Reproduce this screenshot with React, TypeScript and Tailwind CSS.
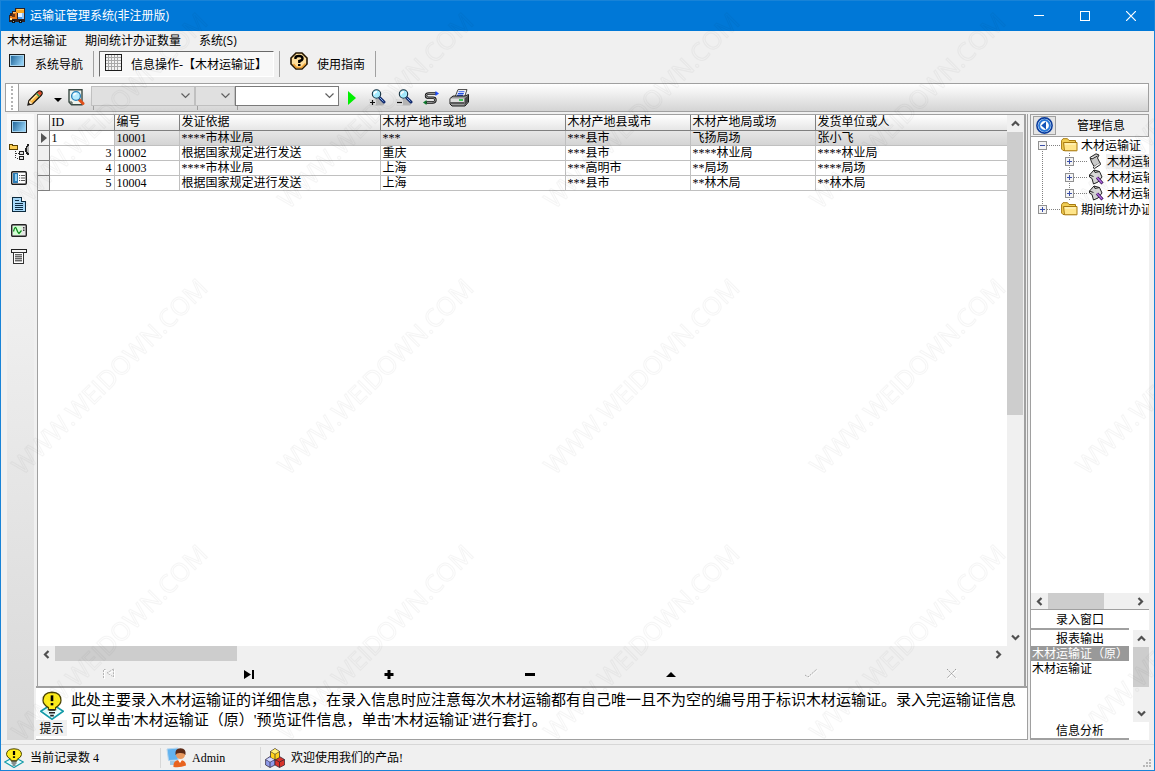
import type { ReactNode } from 'react';

const columns = [
    { title: 'ID', width: 'w-[65px]' },
    { title: '编号', width: 'w-[65px]' },
    { title: '发证依据', width: 'w-[201px]' },
    { title: '木材产地市或地', width: 'w-[185px]' },
    { title: '木材产地县或市', width: 'w-[125px]' },
    { title: '木材产地局或场', width: 'w-[125px]' },
    { title: '发货单位或人', width: '' },
];

const rows = [
    ['1', '10001', '****市林业局', '***', '***县市', '飞扬局场', '张小飞'],
    ['3', '10002', '根据国家规定进行发送', '重庆', '***县市', '****林业局', '****林业局'],
    ['4', '10003', '****市林业局', '上海', '***高明市', '**局场', '****局场'],
    ['5', '10004', '根据国家规定进行发送', '上海', '***县市', '**林木局', '**林木局'],
];

type ArrowProps = { dir: 'up' | 'down' | 'left' | 'right' };

const arrowPaths = {
    up: 'M4 9.5L7.5 6L11 9.5',
    down: 'M4 5.5L7.5 9L11 5.5',
    left: 'M9.5 4L6 7.5L9.5 11',
    right: 'M5.5 4L9 7.5L5.5 11',
};

const arrowSizes = {
    up: 'h-[17px] w-4',
    down: 'h-[17px] w-4',
    left: 'h-4 w-[17px]',
    right: 'h-4 w-[17px]',
};

const ScrollArrow = ({ dir }: ArrowProps) => (
    <button type="button" aria-label={dir} className={`flex shrink-0 items-center justify-center ${arrowSizes[dir]}`}>
        <svg width="15" height="15" viewBox="0 0 15 15" fill="none" stroke="#505050" strokeWidth="2.2">
            <path d={arrowPaths[dir]} />
        </svg>
    </button>
);

/* ---- icons ---- */

const TruckIcon = () => (
    <svg width="16" height="16" viewBox="0 0 16 16" shapeRendering="crispEdges">
        <path d="M6 0h10v14H0V7h1V5h2V3h3z" fill="#2e2224" />
        <path d="M7 1h8v4H7z" fill="#f7a520" />
        <path d="M8 1h7v1H8z" fill="#ffc860" />
        <path d="M9 5h6v4H9z" fill="#e8f2ff" />
        <path d="M9 9h6v2H9z" fill="#4a9df0" />
        <path d="M13 5h2v6h-2z" fill="#8cc4fa" />
        <path d="M4 4h4v7H1V8h2V6h1z" fill="#e87b1c" />
        <path d="M3 6h3v3H3z" fill="#6d3a18" />
        <path d="M4 4h3v1H4z" fill="#ffc56b" />
        <path d="M1 10h2v2H1z" fill="#ffe08a" />
        <path d="M3 12h3v3H3zM10 12h3v3h-3z" fill="#101010" />
        <path d="M4 13h1v1H4zM11 13h1v1h-1z" fill="#9aa" />
    </svg>
);

const ScreenIcon = () => (
    <svg width="16" height="13" viewBox="0 0 16 13" shapeRendering="crispEdges">
        <defs>
            <linearGradient id="screen" x1="0" x2="1" y1="0.2" y2="0.6">
                <stop offset="0" stopColor="#2a6ea0" />
                <stop offset="1" stopColor="#8fcdf2" />
            </linearGradient>
        </defs>
        <path d="M0 0h16v13H0z" fill="#1c1c1c" />
        <path d="M1 1h14v11H1z" fill="#a8d4ee" />
        <path d="M2 2h12v9H2z" fill="url(#screen)" />
    </svg>
);

const GridIcon = () => (
    <svg width="17" height="17" viewBox="0 0 17 17" shapeRendering="crispEdges">
        <path d="M0.5 0.5h16v16h-16z" fill="#f2f2f2" stroke="#1c1c1c" />
        <path d="M3.500 1v15M6.500 1v15M9.500 1v15M12.500 1v15M1 3.500h15M1 6.500h15M1 9.500h15M1 12.500h15" stroke="#a8a8a8" fill="none" />
    </svg>
);

const HelpIcon = () => (
    <svg width="18" height="18" viewBox="0 0 18 18">
        <path d="M6 1h6l5 5v6l-5 5H6l-5-5V6z" fill="#ffdf9c" stroke="#241600" strokeWidth="1.6" />
        <path d="M3.500 12l3 3.500h5l4-4" fill="none" stroke="#f0a030" strokeWidth="1.500" />
        <path d="M5.500 7V5.500Q6 4 9 4Q12.500 4 12.500 6.500Q12.500 8.500 9.300 9v2" fill="none" stroke="#000" strokeWidth="2.400" />
        <path d="M8 12h2.500v2H8z" fill="#000" />
    </svg>
);

const PencilIcon = () => (
    <svg width="16" height="16" viewBox="0 0 16 16">
        <path d="M1 15L2 10.500L10.500 2Q12.500 0 14.500 1.500Q16 3.500 14 5.500L5.500 14z" fill="#f6b341" stroke="#17100a" strokeWidth="1.300" />
        <path d="M2.500 10.500l3 3L1.500 14.500z" fill="#f7dfb8" />
        <path d="M4 10.500L10.500 4" stroke="#ffe59a" strokeWidth="1.500" />
        <path d="M9.500 3.500l3 3" stroke="#2f8f55" strokeWidth="1.500" />
        <path d="M10.500 3Q12.500 .8 14.200 2Q15.300 3.500 13.200 5.500z" fill="#e0452b" />
        <path d="M1 15l.6-2.500 2 2z" fill="#111" />
    </svg>
);

const PreviewIcon = () => (
    <svg width="17" height="17" viewBox="0 0 17 17">
        <path d="M1 .7h13v15H3.500L1 13z" fill="#eef4ee" stroke="#3a4a44" strokeWidth="1.400" />
        <path d="M1 13h3v3" fill="none" stroke="#3a4a44" />
        <path d="M11 10.500l4 4" stroke="#e0501a" strokeWidth="3" strokeLinecap="round" />
        <circle cx="8" cy="7" r="4.400" fill="#b6ecff" stroke="#287fb8" strokeWidth="1.300" />
        <path d="M5.500 6.500Q6 4.500 8.500 4.500" stroke="#fff" strokeWidth="1.300" fill="none" />
    </svg>
);

const ZoomIcon = ({ plus = false }) => (
    <svg width="17" height="17" viewBox="0 0 17 17">
        <rect x="0" y="10" width="15" height="6.500" rx="1.500" fill="#b4b4b4" />
        <rect x="0" y="10" width="7" height="6.500" rx="1.500" fill="#dcdcdc" />
        <path d={plus ? 'M1 13.500h5M3.500 11v5' : 'M1 13.500h5'} stroke="#111" strokeWidth="1.200" />
        <path d="M10.500 8.500l4.500 4.500" stroke="#10286b" strokeWidth="3" strokeLinecap="round" />
        <path d="M10.500 8.500l4 4" stroke="#7fb0f0" strokeWidth="1" />
        <circle cx="7.500" cy="5" r="4.200" fill="#a5ecff" stroke="#14303f" strokeWidth="1.100" />
        <path d="M5.200 5.500Q5.200 2.800 8 2.800" stroke="#fff" strokeWidth="1.600" fill="none" />
    </svg>
);

const FlowIcon = () => (
    <svg width="16" height="14" viewBox="0 0 16 14" fill="none">
        <path d="M13 2.500H6Q3 2.500 3 4.700Q3 6.800 5.500 6.800H10Q12.500 6.800 12.500 9Q12.500 11.500 9.500 11.500H3" stroke="#111" strokeWidth="2.400" />
        <path d="M12.500 2.500H6Q3 2.500 3 4.700Q3 6.800 5.500 6.800H10Q12.500 6.800 12.500 9Q12.500 11.500 9.500 11.500H4" stroke="#c4c4c4" strokeWidth=".7" />
        <path d="M12.500 0l3.500 2.500-3.500 2.500z" fill="#1c4cff" />
        <path d="M3.500 9L0 11.500 3.500 14z" fill="#0c7a2c" />
    </svg>
);

const PrinterIcon = () => (
    <svg width="20" height="18" viewBox="0 0 20 18">
        <path d="M6 8L9 .6h9L15.500 8z" fill="#fff" stroke="#444" />
        <path d="M9.500 2.800h6M8.800 4.600h6M8 6.400h6" stroke="#2450e0" strokeWidth="1.100" />
        <path d="M1 9.500L4 7h12l3.500-1.500V13L16 17H3l-2-2z" fill="#9a9a9a" stroke="#1a1a1a" />
        <path d="M1.500 9.500h14V13h-14z" fill="#dedede" />
        <path d="M15.500 9.500L19 6.500V13l-3.500 3.500z" fill="#4a4a4a" />
        <path d="M10 11h4" stroke="#0cc02c" strokeWidth="1.500" />
        <path d="M2 14h13" stroke="#1a1a1a" />
    </svg>
);

const FolderTreeIcon = () => (
    <svg width="20" height="16" viewBox="0 0 20 16" shapeRendering="crispEdges">
        <path d="M0.500 0.500h3v1h5v4h-8z" fill="#fccf55" stroke="#5a4100" />
        <path d="M6.500 7v7h3M6.500 9.500h3" stroke="#333" fill="none" strokeDasharray="1 1" />
        <path d="M10.500 7.500h4v3h-4zM10.500 12.500h4v3h-4z" fill="#e2e2e2" stroke="#222" />
        <path d="M20 0v11h-2v-1h-1V8h-1V4h1V2h1V0z" fill="#222" />
        <path d="M20 2v7h-1V8h-1V3h1V2z" fill="#b4b4b4" />
    </svg>
);

const FormIcon = () => (
    <svg width="16" height="14" viewBox="0 0 16 14">
        <rect x=".7" y=".7" width="14.600" height="12.600" rx="1.200" fill="#fff" stroke="#1c1c1c" strokeWidth="1.400" />
        <path d="M2 2h5v10H2z" fill="#2d7cb5" />
        <path d="M4 3h2v7H4z" fill="#8fd0f4" />
        <path d="M8 4.500h1.200M10 4.500h4M8 7h1.200M10 7h4M8 9.500h1.200M10 9.500h4" stroke="#555" />
    </svg>
);

const DocIcon = () => (
    <svg width="14" height="15" viewBox="0 0 14 15" shapeRendering="crispEdges">
        <path d="M0.500 0.500h9l4 4v10h-13z" fill="#a9dafa" stroke="#0c2a3d" />
        <path d="M9.500 0.500v4h4" fill="#fff" stroke="#0c2a3d" />
        <path d="M3 3.500h4M3 6.500h8M3 8.500h8M3 10.500h8M3 12.500h8" stroke="#0f2c44" />
    </svg>
);

const ScopeIcon = () => (
    <svg width="16" height="13" viewBox="0 0 16 13">
        <rect x=".7" y=".7" width="14.600" height="11.600" rx="1" fill="#e6e6e6" stroke="#222" strokeWidth="1.400" />
        <path d="M2 2h8.500v9H2z" fill="#d3ffd3" />
        <path d="M2.500 7.500Q4 1 5.500 5T8 9.500L10.500 6.500" fill="none" stroke="#0c8a1c" strokeWidth="1.200" />
        <path d="M12.800 3v1.500M12.800 5.500V7" stroke="#222" strokeWidth="1.300" />
    </svg>
);

const ScrollIcon = () => (
    <svg width="16" height="15" viewBox="0 0 16 15" shapeRendering="crispEdges">
        <path d="M0.500 0.500h15v3h-15z" fill="#f6f6f6" stroke="#222" />
        <path d="M2.500 3.500h10v11h-10z" fill="#fff" stroke="#333" />
        <path d="M4 5h7v8H4z" fill="#bbb" />
        <path d="M4 5.500h7M4 7.500h7M4 9.500h7M4 11.500h7" stroke="#666" />
    </svg>
);

const BulbIcon = ({ width = 20, height = 20 }) => (
    <svg width={width} height={height} viewBox="0 0 20 20" preserveAspectRatio="none" className="shrink-0">
        <path d="M10 9L19.300 14L10 19.500L.7 14z" fill="#e8ffff" stroke="#149aa8" strokeWidth="1.200" />
        <path d="M10 .8Q17.500 1 17.500 6.500Q17.500 9 13 11.500V13H7V11.500Q2.500 9 2.500 6.500Q2.500 1 10 .8z" fill="#ffee1c" stroke="#4a4200" />
        <path d="M7.500 13h5M7.500 15h5M8.500 17h3" stroke="#222" strokeWidth="1.200" />
        <path d="M10 3v4" stroke="#000" strokeWidth="2.200" />
        <path d="M8.900 8.300h2.200v1.600H8.900z" fill="#000" />
    </svg>
);

const UserIcon = () => (
    <svg width="21" height="21" viewBox="0 0 21 21" className="shrink-0">
        <path d="M1 2l11-1v12L2.500 13.500z" fill="#63b3ef" stroke="#b7d6ee" />
        <path d="M4 14l5 0 2 4H4z" fill="#9fc8e4" />
        <path d="M7.500 20Q7 13 13.500 13Q20 13 20 18.500Q14 21 7.500 20z" fill="#e8631f" />
        <path d="M12 13l2 3 2-3z" fill="#fff" />
        <circle cx="14.500" cy="7.500" r="4.600" fill="#e99a60" />
        <path d="M9.500 8Q8.500 1.500 14.500 1.200Q20.500 1.500 19.500 8Q18 5.500 13.500 6Q10.500 6 9.500 8z" fill="#5b2a16" />
    </svg>
);

const BlocksIcon = () => (
    <svg width="20" height="20" viewBox="0 0 20 20" className="shrink-0" stroke="#2a2030" strokeWidth=".7">
        <path d="M.6 11.500L5 8.500l5 3V17l-5 2.500L.6 17z" fill="#8f9bea" />
        <path d="M10 11.500l4.500-3 5 3V17l-5 2.500-4.500-2.500z" fill="#d8342c" />
        <path d="M5.500 3.500L10 .5l4.500 3v6L10 12 5.500 9.500z" fill="#ffd21a" />
        <path d="M5.500 3.500L10 6l4.500-2.500M10 6v5M.6 11.500L5 14l5-2.500M5 14v5.500M10 11.500l4.500 2.500 5-2.500M14.500 14v5.500" fill="none" />
        <path d="M6 3.500L10 1l4 2.500L10 5.700z" fill="#fff07a" stroke="none" />
        <path d="M1.200 11.500L5 9.500l4.200 2L5 13.700z" fill="#d3d9ff" stroke="none" />
    </svg>
);

const FolderIcon = () => (
    <svg width="17" height="14" viewBox="0 0 17 14" className="shrink-0">
        <path d="M.6 2.500L2 .7h4.500L8 2.500h6.500v10H2L.6 11z" fill="#f2cf55" stroke="#a87a10" />
        <path d="M2.500 4.500H16v8.300H3.500z" fill="#ffe58a" stroke="#a87a10" />
        <path d="M4 6h10.500" stroke="#fff8d0" />
    </svg>
);

const PaperIcon = () => (
    <svg width="16" height="16" viewBox="0 0 16 16" className="shrink-0">
        <path d="M2 4.500L8 .8L11 2L9.500 5L12 10L6 13.500L3.500 9z" fill="#c9c9c9" stroke="#222" />
        <path d="M2 4.500L4 6L9.500 3M6 13.500Q4.500 15.500 6.500 15.500L12.500 11.500L12 9.500" fill="#eee" stroke="#222" />
    </svg>
);

const EditPaperIcon = () => (
    <svg width="16" height="16" viewBox="0 0 16 16" className="shrink-0">
        <path d="M1.500 6L6 1L11.500 2.500L14 8L10 13L5.500 15L4 9.500L1.500 8z" fill="#d8d8d8" stroke="#222" />
        <path d="M6 1l1 2.500 4.500-1M1.500 6l4 1.500" stroke="#222" fill="none" />
        <path d="M9 8.500l5.500 6" stroke="#3b1359" strokeWidth="3" />
        <path d="M9 8.500l5 5.500" stroke="#b06be0" strokeWidth="1.500" />
    </svg>
);

const BackIcon = () => (
    <svg width="17" height="17" viewBox="0 0 17 17">
        <circle cx="8.500" cy="8.500" r="7.600" fill="#fff" stroke="#0b3c9c" strokeWidth="1.600" />
        <circle cx="8.500" cy="8.500" r="5.400" fill="#fff" stroke="#2a78d8" strokeWidth="2" />
        <path d="M10 4.500v8L5.200 8.500z" fill="#1353b8" />
    </svg>
);

/* ---- form pieces ---- */

type ComboProps = { label: string; width: string; disabled?: boolean };

const Combo = ({ label, width, disabled }: ComboProps) => (
    <div className={`${width} shrink-0`}>
        <div className={`grid h-5 items-center border ${disabled ? 'border-[#c0c0c0] bg-[#e0e0e0]' : 'border-[#7a7a7a] bg-white'}`}>
            <select aria-label={label} disabled={disabled} className="col-start-1 row-start-1 h-full w-full appearance-none px-1 outline-none">
                <option></option>
            </select>
            <svg className="pointer-events-none col-start-1 row-start-1 mr-1 justify-self-end" width="9" height="6" viewBox="0 0 9 6" fill="none" stroke="#606060">
                <path d="M.5 .5L4.500 4.500L8.500 .5" strokeWidth="1.200" />
            </svg>
        </div>
        <div className="ml-[2px] h-1 w-px bg-[#a0a0a0]" />
    </div>
);

const Divider = () => <div className="h-[26px] w-px shrink-0 bg-[#a0a0a0]" />;

const navigatorButtons: { label: string; icon: ReactNode }[] = [
    { label: '首条', icon: <g><path d="M2.500 11V2.500h2M12.500 2L6 6l6.500 4z" stroke="#fff" fill="none" /><path d="M1.500 10V1.500h2M11.500 1L5 5l6.500 4z" stroke="#b4b4b4" fill="none" strokeDasharray="2 1" /></g> },
    { label: '末条', icon: <path d="M1 2l7 4.500L1 11zM9 2h2v9H9z" fill="#000" /> },
    { label: '添加', icon: <path d="M4.500 2h3v3h3v3h-3v3h-3V8h-3V5h3z" fill="#000" /> },
    { label: '删除', icon: <path d="M1 5h10v3H1z" fill="#000" /> },
    { label: '编辑', icon: <path d="M1 9L6 4l5 5z" fill="#000" /> },
    { label: '提交', icon: <g fill="none" strokeDasharray="2 1"><path d="M1 8l3 2 9-8" stroke="#fff" /><path d="M0 7l3 2 9-8" stroke="#a8a8a8" /></g> },
    { label: '取消', icon: <g fill="none"><path d="M2 2l9 9M11 2l-9 9" stroke="#fff" /><path d="M1 1l9 9M10 1l-9 9" stroke="#9c9c9c" strokeDasharray="2 1" /></g> },
];

const railButtons = [
    { label: '窗口', icon: <ScreenIcon /> },
    { label: '导航树', icon: <FolderTreeIcon /> },
    { label: '表单', icon: <FormIcon /> },
    { label: '文档', icon: <DocIcon /> },
    { label: '统计', icon: <ScopeIcon /> },
    { label: '报表', icon: <ScrollIcon /> },
];

const treeItems = [
    { text: '木材运输证', level: 0, open: true, icon: <FolderIcon /> },
    { text: '木材运输证', level: 1, icon: <PaperIcon />, active: true },
    { text: '木材运输证', level: 1, icon: <EditPaperIcon /> },
    { text: '木材运输证', level: 1, icon: <EditPaperIcon /> },
    { text: '期间统计办证数量', level: 0, last: true, icon: <FolderIcon /> },
];

type TreeLinesProps = { level: number; open?: boolean; last?: boolean };

const TreeLines = ({ level, open, last }: TreeLinesProps) => {
    const x = level === 0 ? 7 : 34;
    const w = level === 0 ? 30 : 57;
    return (
        <svg width={w} height="16" viewBox={`0 0 ${w} 16`} className="shrink-0" shapeRendering="crispEdges" fill="none">
            <g stroke="#808080" strokeDasharray="1 1">
                {level === 1 && <path d="M11.500 0v16M38.500 0v16" />}
                {open && <path d="M11.500 12v4" />}
                {last && <path d="M11.500 0v4" />}
                <path d={`M${x + 9} 8.500H${w}`} />
            </g>
            <path d={`M${x + 0.5} 4.500h8v8h-8z`} fill="#f4f4f4" stroke="#919191" />
            <path d={open ? `M${x + 2} 8.500h5` : `M${x + 2} 8.500h5M${x + 4.5} 6v5`} stroke="#3b4fa8" />
        </svg>
    );
};

const Watermark = () => (
    <svg className="pointer-events-none absolute inset-0 z-10 h-full w-full" aria-hidden="true">
        <defs>
            <pattern id="mark" x="-23" y="-24" width="266" height="266" patternUnits="userSpaceOnUse">
                <text
                    x="131"
                    y="142"
                    textAnchor="middle"
                    transform="rotate(-45 133 133)"
                    className="font-['Open_Sans',sans-serif] text-[25px]"
                    fill="none"
                    stroke="#000"
                    strokeOpacity="0.04"
                >
                    WWW.WEIDOWN.COM
                </text>
            </pattern>
        </defs>
        <rect width="100%" height="100%" fill="url(#mark)" />
    </svg>
);

const TitleBar = () => (
    <header className="flex h-[31px] shrink-0 items-center border-t border-[#1883d7] bg-[#0078d7] pl-2 text-white">
        <TruckIcon />
        <h1 className="ml-[5px] grow text-xs">运输证管理系统(非注册版)</h1>
        <button type="button" aria-label="最小化" className="flex h-full w-[46px] items-center justify-center">
            <svg width="10" height="10" stroke="#fff" shapeRendering="crispEdges"><path d="M0 4.500h10" /></svg>
        </button>
        <button type="button" aria-label="最大化" className="flex h-full w-[46px] items-center justify-center">
            <svg width="10" height="10" stroke="#fff" fill="none" shapeRendering="crispEdges"><path d="M.5 .5h9v9h-9z" /></svg>
        </button>
        <button type="button" aria-label="关闭" className="flex h-full w-[46px] items-center justify-center">
            <svg width="10" height="10" stroke="#fff" strokeWidth="1.200"><path d="M0 0l10 10M10 0L0 10" /></svg>
        </button>
    </header>
);

const DataGrid = () => (
    <table className="w-full table-fixed border-collapse text-left">
        <thead>
            <tr className="h-[15px] bg-linear-to-b from-white to-[#e6e6e6]">
                <th className="w-[11px] border-r border-b border-[#808080] p-0" />
                {columns.map((col) => (
                    <th key={col.title} className={`${col.width} border-r border-b border-[#808080] px-[2px] py-0 font-normal whitespace-nowrap last:border-r-0`}>
                        {col.title}
                    </th>
                ))}
            </tr>
        </thead>
        <tbody>
            {rows.map((row, i) => (
                <tr key={row[1]} className={i === 0 ? 'h-[15px] bg-linear-to-b from-[#e8e8e8] to-[#d4d4d4]' : 'h-[15px] bg-white'}>
                    <td className="border-r border-b border-[#808080] bg-[#f0f0f0] p-0">
                        {i === 0 && (
                            <svg width="10" height="10" className="block pl-[3px]" viewBox="0 0 7 10">
                                <path d="M0 0l6 5-6 5z" fill="#555" />
                            </svg>
                        )}
                    </td>
                    {row.map((cell, j) => (
                        <td
                            key={j}
                            className={`overflow-hidden border-r border-b border-[#c0c0c0] px-[2px] py-0 whitespace-nowrap last:border-r-0 ${j === 0 ? 'bg-white' : ''} ${j === 0 && i > 0 ? 'text-right' : ''}`}
                        >
                            {cell}
                        </td>
                    ))}
                </tr>
            ))}
        </tbody>
    </table>
);

const SidePanel = () => (
    <aside className="flex w-[119px] shrink-0 flex-col border-l border-[#a0a0a0] bg-white">
        <div className="flex h-[23px] shrink-0 items-center border-y border-r border-[#a0a0a0] bg-[#f0f0f0] pr-[2px] pl-[2px]">
            <button type="button" aria-label="收起" className="flex h-[19px] w-[23px] items-center justify-center border border-[#a0a0a0] bg-[#e4e4e4]">
                <BackIcon />
            </button>
            <span className="grow text-center">管理信息</span>
        </div>
        <ul className="min-h-0 grow overflow-hidden">
            {treeItems.map((item, i) => (
                <li key={i}>
                    <button type="button" className="flex h-4 items-center whitespace-nowrap">
                        <TreeLines level={item.level} open={item.open} last={item.last} />
                        {item.icon}
                        <span className={item.active ? 'ml-[2px] bg-[#f0f0f0] pt-px pl-px' : 'ml-[3px] pt-px'}>{item.text}</span>
                    </button>
                </li>
            ))}
        </ul>
        <div className="flex h-4 shrink-0 items-center bg-[#f0f0f0]">
            <ScrollArrow dir="left" />
            <div className="h-full grow">
                <div className="h-full w-2/3 bg-[#cdcdcd]" />
            </div>
            <ScrollArrow dir="right" />
        </div>
        <div className="flex h-[131px] shrink-0 border-t border-[#a0a0a0]">
            <div className="flex w-[98px] flex-col border-b-2 border-[#a0a0a0]">
                <button type="button" className="h-5 border-b-2 border-[#a0a0a0] pt-[2px]">录入窗口</button>
                <button type="button" className="h-4 pt-[2px]">报表输出</button>
                <ul className="grow">
                    <li className="h-[15px] overflow-hidden bg-[#999] whitespace-nowrap text-white">
                        <button type="button" className="block px-px pt-px">木材运输证（原）</button>
                    </li>
                    <li className="h-4">
                        <button type="button" className="block px-px pt-px">木材运输证</button>
                    </li>
                </ul>
                <button type="button" className="h-4 pt-px">信息分析</button>
            </div>
            <div className="mt-5 ml-1 flex h-[92px] w-4 flex-col bg-[#f0f0f0]">
                <ScrollArrow dir="up" />
                <div className="h-10 bg-[#cdcdcd]" />
                <div className="grow" />
                <ScrollArrow dir="down" />
            </div>
        </div>
    </aside>
);

const App = () => {
    return (
        <div className="relative flex h-screen flex-col overflow-hidden border-x border-b border-[#1883d7] bg-[#f0f0f0] font-['Liberation_Serif','Noto_Sans_CJK_SC',sans-serif] text-xs leading-[14px] text-black">
            <div className="contents font-['Open_Sans','Noto_Sans_CJK_SC',sans-serif]">
                <TitleBar />
                <nav className="flex h-5 shrink-0 items-center gap-[18px] pl-[6px]">
                    <a href="#transport">木材运输证</a>
                    <a href="#stats">期间统计办证数量</a>
                    <a href="#system">系统(S)</a>
                </nav>
            </div>

            {/* Page switcher */}
            <div className="flex h-[26px] shrink-0 pl-2">
                <button type="button" className="flex w-[84px] gap-[10px] pt-[3px]">
                    <ScreenIcon />
                    <span className="pt-1">系统导航</span>
                </button>
                <Divider />
                <button type="button" className="mx-[5px] flex h-[26px] w-[175px] gap-[9px] border border-t-[#696969] border-r-white border-b-white border-l-[#696969] bg-[#f8f8f8] pt-[2px] pl-[5px]">
                    <GridIcon />
                    <span className="pt-1 whitespace-nowrap">信息操作-【木材运输证】</span>
                </button>
                <Divider />
                <button type="button" className="flex w-[95px] gap-[9px] pt-px pl-[10px]">
                    <HelpIcon />
                    <span className="pt-[6px]">使用指南</span>
                </button>
                <Divider />
            </div>

            {/* Toolbar */}
            <div className="mt-[6px] mr-[5px] ml-1 flex h-[29px] shrink-0 items-center border border-[#a0a0a0] bg-linear-to-b from-white to-[#d4d4d4]">
                <div className="flex h-full items-center border-r border-[#a0a0a0] bg-white px-[5px]">
                    <div className="h-6 border-l-2 border-dotted border-[#b4b4b4]" />
                </div>
                <button type="button" aria-label="编辑" className="ml-2"><PencilIcon /></button>
                <button type="button" aria-label="更多" className="ml-[11px] pt-1">
                    <svg width="8" height="4"><path d="M0 0h8L4 4z" /></svg>
                </button>
                <button type="button" aria-label="预览" className="mr-[6px] ml-[6px]"><PreviewIcon /></button>
                <Combo label="字段" width="w-[104px]" disabled />
                <Combo label="条件" width="w-10" disabled />
                <Combo label="内容" width="w-[104px]" />
                <div className="ml-2 flex items-center gap-[10px]">
                    <button type="button" aria-label="执行">
                        <svg width="10" height="14"><path d="M1 0l8 7-8 7z" fill="#00f000" /></svg>
                    </button>
                    <button type="button" aria-label="放大" className="ml-[2px]"><ZoomIcon plus /></button>
                    <button type="button" aria-label="缩小"><ZoomIcon /></button>
                    <button type="button" aria-label="流程"><FlowIcon /></button>
                    <button type="button" aria-label="打印"><PrinterIcon /></button>
                </div>
            </div>

            <main className="mt-[2px] mr-[5px] mb-1 ml-[6px] flex min-h-0 grow">
                <div className="flex w-[27px] shrink-0 flex-col items-center bg-linear-to-b from-[#fafafa] to-[#d8d8d8] pr-1">
                    {railButtons.map((item) => (
                        <button key={item.label} type="button" aria-label={item.label} className="flex h-[26px] items-center pb-[2px]">
                            {item.icon}
                        </button>
                    ))}
                </div>

                <div className="ml-[2px] flex min-w-0 grow flex-col border-r border-[#a0a0a0]">
                    <div className="mx-px flex min-h-0 grow flex-col border-t border-r-2 border-l border-[#a0a0a0] bg-[#f0f0f0] pr-px">
                        <div className="flex min-h-0 grow">
                            <div className="min-w-0 grow bg-white">
                                <DataGrid />
                            </div>
                            <div className="flex w-4 flex-col">
                                <ScrollArrow dir="up" />
                                <div className="grow">
                                    <div className="h-[57%] bg-[#cdcdcd]" />
                                </div>
                                <ScrollArrow dir="down" />
                            </div>
                        </div>
                        <div className="flex h-4 shrink-0 pr-4">
                            <ScrollArrow dir="left" />
                            <div className="h-4 grow">
                                <div className="h-[15px] w-[182px] bg-[#cdcdcd]" />
                            </div>
                            <ScrollArrow dir="right" />
                        </div>
                        <div className="flex h-6 shrink-0">
                            {navigatorButtons.map((btn) => (
                                <button key={btn.label} type="button" aria-label={btn.label} className="flex flex-1 items-center justify-center">
                                    <svg width="13" height="12">{btn.icon}</svg>
                                </button>
                            ))}
                        </div>
                    </div>

                    {/* Hint */}
                    <div className="flex h-[54px] shrink-0 border-t-2 border-b border-[#a0a0a0] bg-white">
                        <div className="flex w-[35px] shrink-0 flex-col items-center pt-[3px] pr-1">
                            <BulbIcon width={24} height={29} />
                            <span className="w-full bg-[#f0f0f0] pt-[2px] text-center">提示</span>
                        </div>
                        <p className="grow pt-[2px] text-[15px] leading-5">
                            此处主要录入木材运输证的详细信息，在录入信息时应注意每次木材运输都有自己唯一且不为空的编号用于标识木材运输证。录入完运输证信息可以单击'木材运输证（原）'预览证件信息，单击'木材运输证'进行套打。
                        </p>
                    </div>
                </div>

                <div className="w-[2px] shrink-0" />
                <SidePanel />
            </main>

            <footer className="flex h-[26px] shrink-0 items-center border-t border-[#d7d7d7]">
                <div className="flex w-[160px] items-center gap-[6px] border-r border-[#d7d7d7] pl-[3px]">
                    <BulbIcon />
                    <span className="pt-px">当前记录数 4</span>
                </div>
                <div className="flex w-[100px] items-center gap-[5px] border-r border-[#d7d7d7] pl-[5px]">
                    <UserIcon />
                    <span className="pt-px">Admin</span>
                </div>
                <div className="flex grow items-center gap-[6px] pl-1">
                    <BlocksIcon />
                    <span className="pt-px">欢迎使用我们的产品!</span>
                </div>
                <svg width="10" height="10" className="mt-3 mr-[2px]" fill="#b8b8b8">
                    <path d="M7 0h2v2H7zM4 3h2v2H4zM7 3h2v2H7zM1 6h2v2H1zM4 6h2v2H4zM7 6h2v2H7z" />
                </svg>
            </footer>
            <Watermark />
        </div>
    );
};

export default App;
